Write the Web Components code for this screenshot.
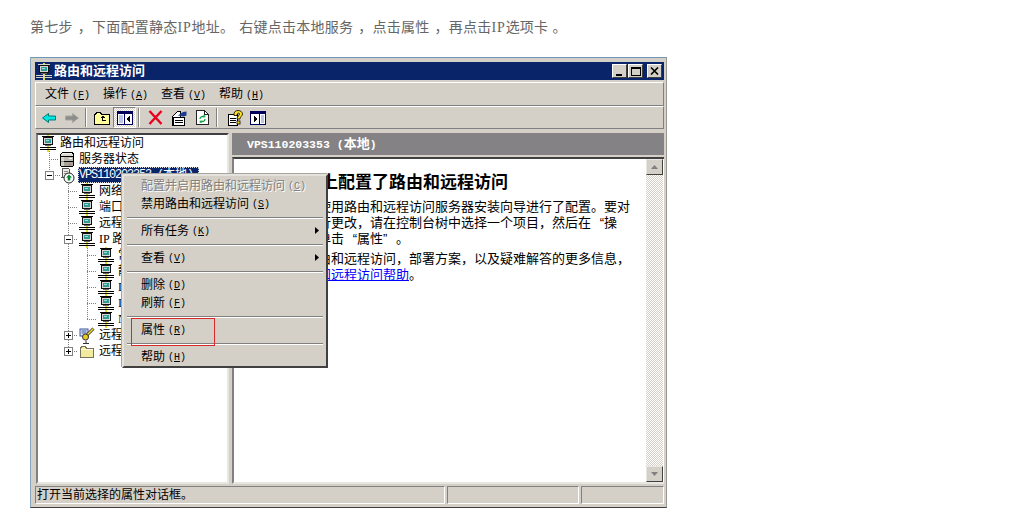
<!DOCTYPE html>
<html lang="zh-CN">
<head>
<meta charset="utf-8">
<title>路由和远程访问</title>
<style>
  html, body { margin: 0; background: #fff; }
  body { font-family: "Liberation Sans", "Noto Sans CJK SC", sans-serif; }
</style>
</head>
<body>
<step-page>
  <step-caption>第七步<span class="c">，</span>下面配置静态<span class="ip">IP</span>地址<span class="s">。</span>右键点击本地服务<span class="c">，</span>点击属性<span class="c">，</span>再点击<span class="ip">IP</span>选项卡<span class="e">。</span></step-caption>
  <mmc-window>
    <mmc-titlebar slot="title">路由和远程访问</mmc-titlebar>
    <mmc-menubar slot="bars">
      <mmc-menu-title label="文件" key="F"></mmc-menu-title>
      <mmc-menu-title label="操作" key="A"></mmc-menu-title>
      <mmc-menu-title label="查看" key="V"></mmc-menu-title>
      <mmc-menu-title label="帮助" key="H"></mmc-menu-title>
    </mmc-menubar>
    <mmc-toolbar slot="bars">
      <tool-button icon="back"></tool-button>
      <tool-button icon="forward"></tool-button>
      <tool-sep></tool-sep>
      <tool-button icon="up"></tool-button>
      <tool-button icon="tree" pressed></tool-button>
      <tool-sep></tool-sep>
      <tool-button icon="delete" style="margin-left: 1px"></tool-button>
      <tool-button icon="props"></tool-button>
      <tool-button icon="refresh" style="margin-left: 1px"></tool-button>
      <tool-sep></tool-sep>
      <tool-button icon="help" style="margin-left: 2px"></tool-button>
      <tool-button icon="action"></tool-button>
    </mmc-toolbar>
    <mmc-tree slot="left">
      <tree-row level="0" icon="router">路由和远程访问</tree-row>
      <tree-row level="1" icon="status">服务器状态</tree-row>
      <tree-row level="1" icon="server" selected>VPS110203353 (<span style="letter-spacing: 0">本地</span>)</tree-row>
      <tree-row level="2" icon="router">网络</tree-row>
      <tree-row level="2" icon="router">端口</tree-row>
      <tree-row level="2" icon="router">远程</tree-row>
      <tree-row level="2" icon="router">IP 路</tree-row>
      <tree-row level="3" icon="router">常</tree-row>
      <tree-row level="3" icon="router">静</tree-row>
      <tree-row level="3" icon="router">D</tree-row>
      <tree-row level="3" icon="router">I</tree-row>
      <tree-row level="3" icon="router">N</tree-row>
      <tree-row level="2" icon="policy">远程</tree-row>
      <tree-row level="2" icon="folder">远程</tree-row>
    </mmc-tree>
    <mmc-detail slot="right" heading="VPS110203353 (本地)"></mmc-detail>
    <mmc-statusbar slot="status">打开当前选择的属性对话框。</mmc-statusbar>
    <mmc-context-menu slot="overlay">
      <menu-row label="配置并启用路由和远程访问" key="C" disabled></menu-row>
      <menu-row label="禁用路由和远程访问" key="S"></menu-row>
      <menu-sep></menu-sep>
      <menu-row label="所有任务" key="K" arrow></menu-row>
      <menu-sep></menu-sep>
      <menu-row label="查看" key="V" arrow></menu-row>
      <menu-sep></menu-sep>
      <menu-row label="删除" key="D"></menu-row>
      <menu-row label="刷新" key="F"></menu-row>
      <menu-sep></menu-sep>
      <menu-row label="属性" key="R"></menu-row>
      <menu-sep></menu-sep>
      <menu-row label="帮助" key="H"></menu-row>
    </mmc-context-menu>
  </mmc-window>
</step-page>

<script>
const routerIcon = (line) => `<svg width="16" height="17" viewBox="0 0 16 17" shape-rendering="crispEdges">
    <rect x="7" y="0" width="2" height="17" fill="#e6dc2a"/>
    <rect x="2" y="1" width="12" height="1" fill="${line}"/>
    <rect x="3" y="2" width="10" height="8" fill="#111"/>
    <rect x="4" y="3" width="8" height="6" fill="#d8d6cc"/>
    <rect x="5" y="4" width="6" height="4" fill="#2f9a98"/>
    <rect x="6" y="5" width="3" height="1" fill="#a8dcd8"/>
    <rect x="5" y="10" width="6" height="1" fill="#666"/>
    <rect x="0" y="12" width="16" height="1" fill="${line}"/>
    <rect x="0" y="14" width="16" height="1" fill="${line}"/>
  </svg>`;

const ICONS = {
  router: routerIcon("#000"),
  status: `<svg width="16" height="17" viewBox="0 0 16 17" shape-rendering="crispEdges">
    <path d="M3 1h10l2 2v12l-2 1H3l-2-1V3z" fill="#000"/>
    <rect x="3" y="2" width="10" height="1" fill="#f4f2ec"/>
    <rect x="2" y="3" width="12" height="2" fill="#dcdad2"/>
    <rect x="2" y="6" width="12" height="4" fill="#c0bcb4"/>
    <rect x="2" y="11" width="12" height="4" fill="#a8a49c"/>
    <rect x="2" y="6" width="3" height="9" fill="#e8e6de" opacity=".6"/>
    <rect x="10" y="7" width="3" height="1" fill="#fff"/>
    <rect x="10" y="13" width="2" height="1" fill="#c06080"/>
  </svg>`,
  server: `<svg width="16" height="17" viewBox="0 0 16 17">
    <path d="M3.500 1.500h6l1 1v8h-7.500z" fill="#eeece6" stroke="#555" shape-rendering="crispEdges"/>
    <rect x="5" y="4" width="4" height="1" fill="#888"/>
    <rect x="5" y="6" width="4" height="1" fill="#888"/>
    <circle cx="10" cy="11" r="5" fill="#fff" stroke="#222"/>
    <path d="M10 7.500l3 3h-1.700v3h-2.600v-3h-1.700z" fill="#008a2e"/>
  </svg>`,
  policy: `<svg width="16" height="17" viewBox="0 0 16 17">
    <rect x="1" y="2" width="8" height="7" fill="#dfe6f4" stroke="#3a55a0"/>
    <path d="M2.500 4h5M2.500 6h5" stroke="#3a55a0"/>
    <path d="M14.500 1.500l-7 7" stroke="#222" stroke-width="3"/>
    <path d="M14.500 1.500l-7 7" stroke="#f0de30" stroke-width="1.600"/>
    <circle cx="6.500" cy="10" r="3" fill="#e6cc20" stroke="#333"/>
    <path d="M7 13.500v3M4 16.500h6" stroke="#333"/>
  </svg>`,
  folder: `<svg width="16" height="17" viewBox="0 0 16 17" shape-rendering="crispEdges">
    <path d="M1.500 4.500v10h13v-9h-7l-1-2h-3z" fill="#f2ea9c" stroke="#77735a"/>
    <rect x="2" y="6" width="12" height="1" fill="#fffde0"/>
  </svg>`,
  back: `<svg width="16" height="12" viewBox="0 0 16 12">
    <path d="M7.500 1.500L1.500 6l6 4.500V8h7V4h-7z" fill="#00e6e0" stroke="#007a78" stroke-linejoin="round"/>
  </svg>`,
  forward: `<svg width="16" height="12" viewBox="0 0 16 12">
    <path d="M8.500 1.500l6 4.500-6 4.500V8h-7V4h7z" fill="#8c8c8a" stroke="#a8a6a0" stroke-linejoin="round"/>
  </svg>`,
  up: `<svg width="16" height="14" viewBox="0 0 16 14" shape-rendering="crispEdges">
    <path d="M.500 3.500h1l1-2h4l1 2h7.500v9.500h-14.500z" fill="#ffff9c" stroke="#000"/>
    <path d="M6 7l2.500-2.500L11 7H9v2h3v1H8V7z" fill="#000"/>
  </svg>`,
  tree: `<svg width="16" height="14" viewBox="0 0 16 14" shape-rendering="crispEdges">
    <rect x=".5" y=".5" width="15" height="13" fill="#fff" stroke="#00005a"/>
    <rect x="1" y="1" width="14" height="2" fill="#00005a"/>
    <rect x="7" y="1" width="1" height="12" fill="#00005a"/>
    <rect x="2" y="4" width="4" height="8" fill="#b8c4e8"/>
    <path d="M13 4.500v7L9.500 8z" fill="#000"/>
  </svg>`,
  delete: `<svg width="15" height="15" viewBox="0 0 15 15">
    <path d="M1.500 1l12 13M13.500 1l-12 13" stroke="#e8001c" stroke-width="2.400"/>
  </svg>`,
  props: `<svg width="17" height="16" viewBox="0 0 17 16">
    <path d="M2.500 6.500l5-5h3v13.500h-8z" fill="#fff" stroke="#000" shape-rendering="crispEdges"/>
    <path d="M3 7.500h11.500V15H3z" fill="#fff" stroke="#000" shape-rendering="crispEdges"/>
    <path d="M5 10h8M5 12h8" stroke="#000" shape-rendering="crispEdges"/>
    <path d="M8 5.500l5-3.500 3.500-.500v4l-3 1z" fill="#1a3c8c"/>
  </svg>`,
  refresh: `<svg width="13" height="15" viewBox="0 0 13 15">
    <path d="M.500.500h8l4 4v10h-12z" fill="#fff" stroke="#222" shape-rendering="crispEdges"/>
    <path d="M8.500.500v4h4" fill="none" stroke="#222" shape-rendering="crispEdges"/>
    <path d="M4 9a2.500 2.500 0 0 1 4-2M9 9a2.500 2.500 0 0 1-4 2" fill="none" stroke="#0a9a3c" stroke-width="1.300"/>
    <path d="M7 5l2.500 .5-.5 2.500zM6 13l-2.500-.5.500-2.500z" fill="#0a9a3c"/>
  </svg>`,
  help: `<svg width="16" height="16" viewBox="0 0 16 16">
    <path d="M1.500 4.500h9V15h-9z" fill="#fff" stroke="#000" shape-rendering="crispEdges"/>
    <path d="M3 8h6M3 10h6M3 12h6" stroke="#000" shape-rendering="crispEdges"/>
    <path d="M7 5.500C6.500 2 8.500.500 11 .500s4.500 1.500 4.500 3.500c0 2-2.500 2.500-2.500 5H10c0-3 2.500-3.500 2.500-5 0-1.500-2.500-1.500-2.500 1.500z" fill="#ffe020" stroke="#000" stroke-width=".8"/>
    <rect x="10" y="11" width="3" height="3" fill="#ffe020" stroke="#000" stroke-width=".8"/>
  </svg>`,
  action: `<svg width="16" height="14" viewBox="0 0 16 14" shape-rendering="crispEdges">
    <rect x=".5" y=".5" width="15" height="13" fill="#fff" stroke="#00005a"/>
    <rect x="1" y="1" width="14" height="2" fill="#00005a"/>
    <rect x="9" y="1" width="1" height="12" fill="#00005a"/>
    <rect x="11" y="4" width="3" height="8" fill="#b8c4e8"/>
    <path d="M3.500 4.500v7L7 8z" fill="#000"/>
  </svg>`,
};

const KEY_CSS = `
  .key { font: 10px "Liberation Mono", monospace; }
  .key u { text-underline-offset: 1px; }
`;
const keyMarkup = (k) => `<span class="key">(<u>${k}</u>)</span>`;

// base class, every element just renders its css + html into an open shadow root
class ShadowElement extends HTMLElement {
  constructor() {
    super();
    this.attachShadow({ mode: "open" });
  }
  css() { return ""; }
  html() { return "<slot></slot>"; }
  connectedCallback() {
    this.shadowRoot.innerHTML = `<style>${this.css()}</style>${this.html()}`;
  }
}

class StepPage extends ShadowElement {
  css() {
    return `:host { display: flex; flex-direction: column; gap: 19px; padding: 18px 0 0 30px; }`;
  }
}

class StepCaption extends ShadowElement {
  css() {
    return `
      :host {
        display: block; height: 20px; white-space: nowrap; color: #666; letter-spacing: .25px;
        font: 14px/20px "Liberation Serif", "Noto Sans CJK SC", serif;
      }
      ::slotted(.c) { margin-left: 5px; }
      ::slotted(.s) { margin-right: 5px; }
      ::slotted(.e) { margin-left: 4px; }
      ::slotted(.ip) { letter-spacing: .8px; }
    `;
  }
}

class MmcWindow extends ShadowElement {
  css() {
    return `
      :host {
        display: flex; flex-direction: column; position: relative; box-sizing: border-box;
        width: 637px; height: 451px; padding: 4px 2px 2px 4px;
        background: #d4d0c8; color: #000;
        border: 1px solid; border-color: #6f97b8 #9a9892 #404040 #88a8c4;
        font: 12px/16px "Liberation Serif", "Noto Sans CJK SC", serif;
      }
      .panes { display: flex; gap: 3px; height: 351px; margin: 4px 0 1px 1px; }
      ::slotted([slot=title]) { margin-bottom: 2px; }
    `;
  }
  html() {
    return `
      <slot name="title"></slot>
      <slot name="bars"></slot>
      <div class="panes"><slot name="left"></slot><slot name="right"></slot></div>
      <slot name="status"></slot>
      <slot name="overlay"></slot>`;
  }
}

class MmcTitlebar extends ShadowElement {
  css() {
    return `
      :host {
        display: flex; align-items: center; height: 18px; flex: none;
        background: #0a246a; color: #fff; font: bold 13px/18px "Liberation Sans", "Noto Sans CJK SC", sans-serif;
      }
      .icon { display: flex; margin: 0 2px 0 1px; }
      .text { flex: 1; }
      .btns { display: flex; margin-right: 2px; }
      .btn {
        box-sizing: border-box; width: 15px; height: 14px; margin-left: 1px;
        background: #d4d0c8; border: 1px solid; border-color: #fff #404040 #404040 #fff;
        display: flex; align-items: center; justify-content: center;
      }
      .btn.close { margin-left: 4px; }
    `;
  }
  html() {
    return `
      <span class="icon">${routerIcon("#d8d4c8")}</span>
      <span class="text"><slot></slot></span>
      <span class="btns">
        <span class="btn"><svg width="9" height="9" shape-rendering="crispEdges"><rect x="1" y="7" width="6" height="2"/></svg></span>
        <span class="btn"><svg width="10" height="9" shape-rendering="crispEdges"><path d="M.5 1.500h9v7h-9z" fill="none" stroke="#000"/><rect y="0" width="10" height="2"/></svg></span>
        <span class="btn close"><svg width="9" height="8"><path d="M1 .5l7 7M8 .5l-7 7" stroke="#000" stroke-width="1.600"/></svg></span>
      </span>`;
  }
}

class MmcMenubar extends ShadowElement {
  css() {
    return `
      :host {
        display: flex; align-items: center; box-sizing: border-box; height: 24px; padding-left: 9px;
        border: 1px solid; border-color: #fff #808080 #808080 #fff;
      }
    `;
  }
}

class MmcMenuTitle extends ShadowElement {
  css() {
    return `:host { display: block; width: 58px; white-space: nowrap; } ${KEY_CSS}`;
  }
  html() {
    return `${this.getAttribute("label")} ${keyMarkup(this.getAttribute("key"))}`;
  }
}

class MmcToolbar extends ShadowElement {
  css() {
    return `
      :host {
        display: flex; align-items: center; box-sizing: border-box; height: 23px; padding-left: 1px;
        border: 1px solid; border-color: #fff #808080 #808080 #fff;
      }
    `;
  }
}

class ToolButton extends ShadowElement {
  css() {
    return `
      :host {
        display: flex; align-items: center; justify-content: center; box-sizing: border-box;
        width: 23px; height: 21px;
      }
      :host([pressed]) {
        background: repeating-conic-gradient(#fff 0 25%, #d4d0c8 0 50%) 0 0 / 2px 2px;
        border: 1px solid; border-color: #808080 #fff #fff #808080;
      }
    `;
  }
  html() {
    return ICONS[this.getAttribute("icon")];
  }
}

class ToolSep extends ShadowElement {
  css() {
    return `
      :host { display: block; box-sizing: border-box; width: 2px; height: 19px; margin: 0 3px 0 2px; border-left: 1px solid #808080; border-right: 1px solid #fff; }
    `;
  }
  html() { return ""; }
}

class MmcTree extends ShadowElement {
  css() {
    return `
      :host {
        display: block; position: relative; box-sizing: border-box; width: 193px; height: 351px;
        padding: 0; background: #fff; overflow: hidden;
        border: 2px solid; border-color: #404040 #e8e6e0 #e8e6e0 #808080;
      }
      svg { position: absolute; left: -38px; top: -135px; width: 240px; height: 400px; }
    `;
  }
  html() {
    // page coordinates inside the svg, easier to read off the screenshot
    const dots = [
      "M49 151V175", "M49 159H59", "M53 175H61",
      "M68 184V351", "M68 191H78", "M68 207H78", "M68 223H78", "M72 239H78", "M72 335H78", "M72 351H78",
      "M87 246V319", "M87 255H97", "M87 271H97", "M87 287H97", "M87 303H97", "M87 319H97",
    ].join("");
    const box = (x, y, plus) => `
      <rect x="${x + 0.5}" y="${y + 0.5}" width="8" height="8" fill="#fff" stroke="#808080"/>
      <path d="M${x + 2} ${y + 4.5}h5${plus ? `M${x + 4.5} ${y + 2}v5` : ""}" stroke="#000"/>`;
    return `
      <svg shape-rendering="crispEdges" viewBox="0 0 240 400">
        <path d="${dots}" fill="none" stroke="#808080" stroke-dasharray="1 1"/>
        ${box(45, 171, false)}${box(64, 235, false)}${box(64, 331, true)}${box(64, 347, true)}
      </svg>
      <slot></slot>`;
  }
}

class TreeRow extends ShadowElement {
  css() {
    const level = Number(this.getAttribute("level"));
    return `
      :host {
        display: flex; position: relative; align-items: center; height: 16px;
        padding-left: ${Math.round(level * 19.4)}px; white-space: nowrap;
      }
      .icon { display: flex; width: 16px; height: 16px; margin: 0 3px 0 2px; align-items: center; }
      .label { padding: 0 1px; line-height: 16px; }
      :host([selected]) .label {
        background: #0a246a; color: #fff; outline: 1px dotted #ddd; outline-offset: -1px;
        font-family: "Liberation Mono", "Noto Sans CJK SC", monospace; letter-spacing: -1.200px; padding-right: 6px;
      }
    `;
  }
  html() {
    return `<span class="icon">${ICONS[this.getAttribute("icon")]}</span><span class="label"><slot></slot></span>`;
  }
}

class MmcDetail extends ShadowElement {
  css() {
    return `
      :host { display: flex; flex-direction: column; width: 432px; height: 351px; }
      header {
        flex: none; height: 22px; padding-left: 15px; background: #848284; color: #fff;
        font: bold 11.500px/22px "Liberation Mono", "Noto Sans CJK SC", monospace;
      }
      header b { font: bold 13px/22px "Liberation Sans", "Noto Sans CJK SC", sans-serif; }
      .body {
        flex: 1; display: flex; min-height: 0; margin-top: 2px; background: #fff;
        border: 2px solid; border-color: #404040 #e8e6e0 #e8e6e0 #808080; border-right: 0;
      }
      /* text starts under the context menu, only the tail of each line shows */
      .text {
        flex: 1; padding: 14px 0 0 84px; white-space: nowrap; overflow: hidden;
        font: 13px/16px "Liberation Sans", "Noto Sans CJK SC", sans-serif;
      }
      h1 { margin: 0 0 6px 3px; font: bold 17px/20px "Liberation Sans", "Noto Sans CJK SC", sans-serif; }
      p { margin: 0 0 4px; }
      a { color: #00f; text-decoration: underline; }
      /* curly quotes take a full cell like the cjk text around them */
      .ql, .qr { display: inline-block; width: 13px; }
      .ql { text-align: right; }
      .qr { text-align: left; }
    `;
  }
  html() {
    return `
      <header>VPS110203353 (<b>本地</b>)</header>
      <div class="body">
        <div class="text">
          <h1>上配置了路由和远程访问</h1>
          <p>使用路由和远程访问服务器安装向导进行了配置。要对<br>行更改，请在控制台树中选择一个项目，然后在<span class="ql">“</span>操<br>单击<span class="ql">“</span>属性<span class="qr">”</span>。</p>
          <p>由和远程访问，部署方案，以及疑难解答的更多信息，<br><a href="#">和远程访问帮助</a>。</p>
        </div>
        <mmc-scrollbar></mmc-scrollbar>
      </div>`;
  }
}

class MmcScrollbar extends ShadowElement {
  css() {
    return `
      :host {
        display: flex; flex-direction: column; flex: none; width: 17px; margin-right: 1px;
        background: repeating-conic-gradient(#fff 0 25%, #d4d0c8 0 50%) 0 0 / 2px 2px;
      }
      .btn {
        box-sizing: border-box; height: 16px; flex: none; background: #d4d0c8;
        border: 1px solid; border-color: #e8e6e0 #404040 #404040 #e8e6e0;
        display: flex; align-items: center; justify-content: center;
      }
      .track { flex: 1; }
    `;
  }
  html() {
    return `
      <div class="btn"><svg width="7" height="4"><path d="M3.500 0L7 4H0z" fill="#808080"/></svg></div>
      <div class="track"></div>
      <div class="btn"><svg width="7" height="4"><path d="M0 0h7L3.500 4z" fill="#808080"/></svg></div>`;
  }
}

class MmcStatusbar extends ShadowElement {
  css() {
    return `
      :host { display: flex; height: 20px; gap: 2px; padding-top: 1px; box-sizing: border-box; }
      .cell {
        box-sizing: border-box; height: 18px; padding-left: 1px; line-height: 17px;
        border: 1px solid; border-color: #808080 #fff #fff #808080;
      }
    `;
  }
  html() {
    return `
      <div class="cell" style="width: 410px"><slot></slot></div>
      <div class="cell" style="width: 132px"></div>
      <div class="cell" style="width: 83px"></div>`;
  }
}

class MmcContextMenu extends ShadowElement {
  css() {
    return `
      :host {
        display: block; position: absolute; left: 91px; top: 116px; box-sizing: border-box;
        width: 206px; height: 194px; padding: 1px 2px;
        background: #d4d0c8; border: 2px solid;
        border-color: #e4e2dc #404040 #404040 #e4e2dc;
        box-shadow: -1px -1px 0 #a8a6a0;
      }
      /* the red marker drawn over the screenshot */
      .mark {
        position: absolute; left: 7px; top: 142px; width: 84px; height: 28px;
        box-sizing: border-box; border: 1px solid #d9282a;
      }
    `;
  }
  html() {
    return `<slot></slot><div class="mark"></div>`;
  }
}

class MenuRow extends ShadowElement {
  css() {
    return `
      :host {
        display: flex; align-items: center; position: relative; height: 18px;
        padding-left: 15px; white-space: nowrap;
      }
      :host([disabled]) { color: #808080; text-shadow: 1px 1px 0 #fff; }
      .arrow { position: absolute; right: 5px; top: 5px; }
      ${KEY_CSS}
    `;
  }
  html() {
    const arrow = this.hasAttribute("arrow")
      ? `<svg class="arrow" width="4" height="7"><path d="M0 0l4 3.500L0 7z"/></svg>`
      : "";
    return `${this.getAttribute("label")}&nbsp;${keyMarkup(this.getAttribute("key"))}${arrow}`;
  }
}

class MenuSep extends ShadowElement {
  css() {
    return `
      :host { display: block; box-sizing: border-box; height: 9px; padding-top: 4px; }
      div { height: 2px; margin: 0 1px; box-sizing: border-box; border-top: 1px solid #808080; border-bottom: 1px solid #fff; }
    `;
  }
  html() { return "<div></div>"; }
}

customElements.define("step-page", StepPage);
customElements.define("step-caption", StepCaption);
customElements.define("mmc-window", MmcWindow);
customElements.define("mmc-titlebar", MmcTitlebar);
customElements.define("mmc-menubar", MmcMenubar);
customElements.define("mmc-menu-title", MmcMenuTitle);
customElements.define("mmc-toolbar", MmcToolbar);
customElements.define("tool-button", ToolButton);
customElements.define("tool-sep", ToolSep);
customElements.define("mmc-tree", MmcTree);
customElements.define("tree-row", TreeRow);
customElements.define("mmc-detail", MmcDetail);
customElements.define("mmc-scrollbar", MmcScrollbar);
customElements.define("mmc-statusbar", MmcStatusbar);
customElements.define("mmc-context-menu", MmcContextMenu);
customElements.define("menu-row", MenuRow);
customElements.define("menu-sep", MenuSep);
</script>
</body>
</html>
